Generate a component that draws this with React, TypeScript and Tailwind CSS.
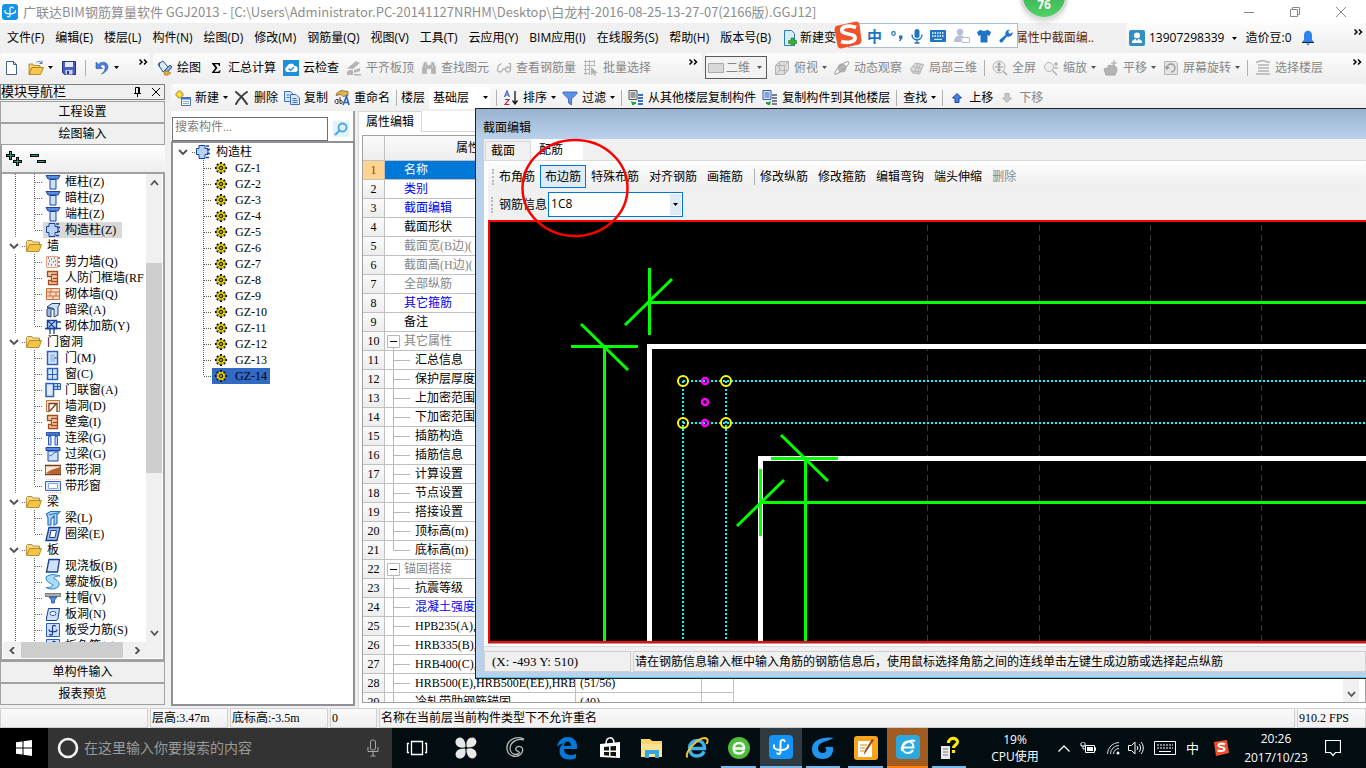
import React from 'react';

const UI = "font-['Open_Sans','Noto_Sans_CJK_SC',sans-serif]";
const SONG = "font-['Liberation_Serif','Noto_Sans_CJK_SC',serif]";

/* ---------- icons ---------- */

const GRAY = '#b4b4b4';

const ICONS: Record<string, React.ReactNode> = {
  file: <path d="M2.500 1.500h7l3 3v10h-10z M9.500 1.500v3h3" fill="#fff" stroke="#43608f" />,
  open: (
    <>
      <path d="M1 4h4l1 1.500h6V8H4l-3 6z" fill="#f3cf6a" stroke="#a87a1c" strokeWidth=".8" />
      <path d="M4 7.500h11.500l-3 7H1z" fill="#f7c64a" stroke="#a87a1c" strokeWidth=".8" />
      <path d="M8.500 2.500c2-2 4-1 5 .5M14 .8v2.700h-2.600" fill="none" stroke="#4a6fa0" />
    </>
  ),
  save: (
    <>
      <path d="M1.500 1.500h13v13h-11l-2-2z" fill="#4a5bc4" stroke="#28337e" />
      <path d="M4 2h8v5H4z" fill="#e6eaff" />
      <path d="M4.500 10h7v4.500h-7z" fill="#cfd4ea" />
      <path d="M6 11h2v3H6z" fill="#28337e" />
    </>
  ),
  undo: <path d="M2 2v6.500h6.500L6.300 6.300C9 3.500 12 5 11 9c-.5 2-2 4-3.500 5C13 12 15.500 7.500 13 4 11 1.500 7 1.600 4.300 4.300z" fill="#4a7fdc" stroke="#2b55a8" strokeWidth=".6" />,
  paint: (
    <>
      <path d="M1 4l5-3 5 6-5 5z" fill="#dbe8f8" stroke="#31558f" />
      <path d="M3 2l-1 5" stroke="#31558f" />
      <path d="M8 10l5-5 2 2-5 6z" fill="#86aee0" stroke="#31558f" />
      <path d="M7 12l3-1 4 2-4 2.500-3-1z" fill="#e0b13a" stroke="#8d6b17" strokeWidth=".6" />
    </>
  ),
  sigma: <path d="M4 3h8v3h-1C10.700 4.700 10.300 4.300 9 4.300H6.800L9.500 8l-3.300 3.700H9.500c1.500 0 2-.6 2.300-1.700h.7L12 13H4v-.8L7.400 8 4 3.800z" fill="#000" />,
  cloud: (
    <>
      <rect width="16" height="16" fill="#1e8fd8" />
      <path d="M4 12a3 3 0 0 1 0-5.500 4 4 0 0 1 7.500-.5A3 3 0 0 1 12 12z" fill="#fff" />
      <path d="M5.500 8.500l2 2 3.500-3.500" fill="none" stroke="#1e8fd8" strokeWidth="1.400" />
    </>
  ),
  align: <path d="M1 8.500L10 1l4 2-7 6zM3 10h4v5H1v-3zM8 10l6-2v3l-6 2zM8 14h7v1.500H8z" fill={GRAY} />,
  binoc: <path d="M3 2h3v3h4V2h3l2 6v6h-5V9H6v5H1V8z M4.500 5v3M11.500 5v3" fill={GRAY} stroke="#ddd" strokeWidth=".6" />,
  glasses: <path d="M6.500 9.500a2.500 2.500 0 1 1-5 0c0-3 1.500-5 4-6M14.500 9.500a2.500 2.500 0 1 1-5 0 2.500 2.500 0 0 1 5 0V4l-2-1M6.500 9h3" fill="none" stroke={GRAY} strokeWidth="1.300" />,
  batch: (
    <>
      <path d="M1 1.500h11M1 5.500h11M1 9.500h6M2.500 0v15M6.500 0v15M11.500 0v6M1 13.500h5" stroke={GRAY} />
      <path d="M8 7l7 6-3 .3 1 2.300-1.500.4-1-2.500L8 15z" fill={GRAY} />
    </>
  ),
  rect: <path d="M.5 3.500h15v9H.5z" fill="#d8d8d8" stroke="#aaa" />,
  cube: (
    <>
      <path d="M1.500 5.500l4-4h9v8l-4 5h-9z" fill="#ddd" stroke={GRAY} />
      <path d="M1.500 5.500h9v9M10.500 5.500l4-4M5.500 2v8.500h9M5.500 10.500l-4 4" fill="none" stroke={GRAY} />
    </>
  ),
  orbit: (
    <>
      <circle cx="8" cy="8" r="4.500" fill={GRAY} />
      <path d="M1 14.500C-1 11 9 2 14 1.500c4 1-6 11-13 13z" fill="none" stroke="#9d9d9d" />
    </>
  ),
  local: (
    <>
      <path d="M1.500 9l5-6 8 1.500-4 9.500-7-1z" fill="#ddd" stroke={GRAY} />
      <path d="M3.500 6.500l9.500 2M9 3.500L5 13.500M11.500 4L8 14M2.500 11l9 1" stroke={GRAY} />
    </>
  ),
  full: (
    <>
      <circle cx="7" cy="7" r="6" fill="#eee" stroke={GRAY} />
      <path d="M7 3v8M3 7h8M5.500 4.500L7 3l1.500 1.500M5.500 9.500L7 11l1.500-1.500M11.500 11.500l3.500 3.500" fill="none" stroke="#9a9a9a" strokeWidth="1.200" />
    </>
  ),
  zoom: (
    <>
      <circle cx="6" cy="7" r="4.500" fill="#eee" stroke={GRAY} />
      <path d="M9.500 10.500L14 15M13 2v4M11 4h4M11 8h4" fill="none" stroke={GRAY} strokeWidth="1.500" />
    </>
  ),
  hand: <path d="M3 15l-2-6 2-1 2 1V6l2-1 1 1 2-1 3 2 1 3-2 5zM11 0v6M8 3h6" fill={GRAY} stroke="#a5a5a5" />,
  rotate: (
    <>
      <path d="M1.500 1.500h11l2 2v11h-13z" fill="#e4e4e4" stroke={GRAY} />
      <path d="M4 8a4 4 0 1 1 4 4M2.500 6.500L4 9l2-2" fill="none" stroke="#999" strokeWidth="1.400" />
    </>
  ),
  floors: <path d="M1 2.500L7 .5l8 2M3 5h11M3 8h11M3 11h11M1 14h14" fill="none" stroke={GRAY} strokeWidth="1.700" />,
  create: (
    <>
      <path d="M3 1h3v2h2v3H6v2H3V6H1V3h2z" fill="#ffe24a" stroke="#9a7d12" strokeWidth=".7" />
      <path d="M6.500 7.500h9v8h-9z" fill="#fff" stroke="#4774b8" />
      <path d="M6.500 7.500h9v2h-9z" fill="#3c74c8" />
      <path d="M8 11.500h6M8 13.500h6" stroke="#8aa9d8" />
    </>
  ),
  del: <path d="M2 2c4 3 8 7 11 12M13 2C8 5 5 9 2 14" stroke="#3c3c3c" strokeWidth="2" fill="none" strokeLinecap="round" />,
  copy: (
    <>
      <path d="M.5 1.500h6l3 3v7h-9z" fill="#dbe8fa" stroke="#3f6fc0" />
      <path d="M6.500 4.500h5.500l3.500 3.500v6.500h-9z" fill="#dbe8fa" stroke="#3f6fc0" />
      <path d="M8.500 8.500h4M8.500 10.500h5M8.500 12.500h5M2.500 5h3M2.500 7.500h3" stroke="#3f6fc0" />
    </>
  ),
  rename: (
    <>
      <path d="M3 3l4-2.500 7 1v4l-5 1-2-2-5 1z" fill="#e0b64d" stroke="#6b5314" strokeWidth=".7" />
      <path d="M9 15l3.500-8.500L15 15M10 12.500h4" stroke="#2f62c0" strokeWidth="1.600" fill="none" />
      <path d="M4 9.500c-4-1-4 5 0 4V9M6 7v6.500c3 1 3-4 0-3" fill="none" stroke="#333" />
    </>
  ),
  sort: (
    <>
      <path d="M1.500 7L4 1l2.500 6M2.500 5h3" fill="none" stroke="#3f62b5" strokeWidth="1.200" />
      <path d="M2 9.500h4l-4 5h4.500" fill="none" stroke="#9c2f4c" strokeWidth="1.200" />
      <path d="M12 1v12M9.500 10.500L12 14l2.500-3.500" fill="none" stroke="#111" strokeWidth="1.300" />
    </>
  ),
  filter: <path d="M1 2h14v1.500L9.500 9v6l-3-2V9L1 3.500z" fill="#5c8fe6" stroke="#2f5db0" strokeWidth=".8" />,
  fromFloor: (
    <>
      <path d="M1 .5h8v9H1z" fill="#eee" stroke="#555" />
      <path d="M2.500 3h5M2.500 5h5M2.500 7h5" stroke="#444" />
      <path d="M10 5h5M10 8h5M10 11h5M10 14h5" stroke="#3a6fc4" strokeWidth="1.800" />
      <path d="M4 15l-1-4 2 1h3v2H6l1 1z" fill="#1da33b" />
    </>
  ),
  toFloor: (
    <>
      <path d="M1 .5h8v9H1z" fill="#dfe9fb" stroke="#3459b4" />
      <path d="M2.500 3h5M2.500 5h5M2.500 7h5" stroke="#3459b4" />
      <path d="M10 5h5M10 8h5M10 11h5M10 14h5" stroke="#75808e" strokeWidth="1.800" />
      <path d="M8 15l1-4-2 1H4v2h2l-1 1z" fill="#1da33b" />
    </>
  ),
  up: <path d="M8 3.500l4.500 4.500H10v4.500H6V8H3.500z" fill="#4a80e8" stroke="#1c3f94" />,
  down: <path d="M8 12.500L3.500 8H6V3.500h4V8h2.500z" fill="#c8c8c8" stroke="#b0b0b0" />,
  newDoc: (
    <>
      <path d="M2.500.5h7l3 3v12h-10z" fill="#d6ecfb" stroke="#2f7cb8" />
      <path d="M9 8h3v2.500h2.500v3H12V16H9v-2.500H6.500v-3H9z" fill="#35b436" stroke="#1d7c22" strokeWidth=".6" />
    </>
  ),
  user: (
    <>
      <rect width="16" height="16" rx="2" fill="#2f8fc6" />
      <circle cx="8" cy="5.500" r="3" fill="#fff" />
      <path d="M3 13v-2l3-2h4l3 2v2z" fill="#fff" />
      <path d="M6.500 8.500L8 11l1.500-2.500z" fill="#2f8fc6" />
    </>
  ),
  bell: (
    <>
      <path d="M8 .8c3 0 4 2.500 4 5v4l2 2.500H2l2-2.500v-4c0-2.500 1-5 4-5z" fill="#2f83f0" />
      <path d="M2 12.500h12" stroke="#222" />
      <path d="M6 13.500h4L8 15.500z" fill="#2f83f0" />
    </>
  ),
  folder: (
    <>
      <path d="M.5 13V3.500l1-1H6l1 1.500h6.500v3" fill="#f3d98b" stroke="#a87a1c" strokeWidth=".8" />
      <path d="M3.500 6.500h12L13 13.500H.7z" fill="#f6c443" stroke="#a87a1c" strokeWidth=".8" />
    </>
  ),
  pillar: (
    <>
      <path d="M1 1.500h14l-2 3.500H3z" fill="#5b8be0" stroke="#1c469c" />
      <path d="M5 5.500h6v9.500H5z" fill="#cfe0fa" stroke="#1c469c" />
    </>
  ),
  gz: (
    <>
      <path d="M4 1.500h6v3h3v6h-3v4H4v-4H1.500v-6H4z" fill="#b9d1f5" stroke="#16429c" />
      <path d="M11 2h3M12 5.500h3M12 9.500h3M11 13.500h3" stroke="#16429c" strokeWidth="1.600" />
    </>
  ),
  shear: (
    <>
      <path d="M1.500 2.500h11v11h-11z" fill="#ededed" stroke="#e5a07e" />
      <path d="M3 4h1M6 5h1M9 4h1M4 7h1M8 8h1M3 10h1M6 11h1M10 11h1M10 7h1" stroke="#333" />
      <path d="M13 4h2M13 8h2M13 12h2" stroke="#c5511a" strokeWidth="1.500" />
    </>
  ),
  niche: <path d="M2.500 1.500h10v13h-9v-4h3v-4h-4zM6 4.500h6.500M8 8.500h4M6 11.500h6" fill="#f7cfae" stroke="#a84a12" strokeWidth="1.300" />,
  brick: (
    <>
      <path d="M1.500 2.500h13v11h-13z" fill="#fbd8bf" stroke="#c4713e" />
      <path d="M1.500 6h13M1.500 10h13M6 2.500V6M11 6v4M5 6v4M8 10v3.500" stroke="#c4713e" />
    </>
  ),
  hiddenBeam: (
    <>
      <path d="M2 5l5-3.500h8L13 5v8l-4 2V7z" fill="#cfe0f5" stroke="#25416e" />
      <path d="M2 5l7 1v2L2 7z" fill="#385f9f" />
      <path d="M2 7v7l4 1V7.500" fill="#9dbbe2" stroke="#25416e" />
    </>
  ),
  masonry: (
    <>
      <path d="M2.500 2.500h9v8h-9z" fill="#cfe0fa" stroke="#16429c" strokeWidth="1.500" />
      <path d="M0 10.500h16M12 4h4M5 10v6M9 10v6M3 3l7 7M10 3L4 9" stroke="#16429c" strokeWidth="1.300" />
    </>
  ),
  door: (
    <>
      <path d="M2.500 1.500h10v13h-10z" fill="#d7e6fb" stroke="#2a5fbe" strokeWidth="1.500" />
      <path d="M5 4h5v8H5z" fill="#a8c8f2" />
      <path d="M10 8h1.500" stroke="#111" />
    </>
  ),
  window: (
    <>
      <path d="M2.500 2.500h10v11h-10z" fill="#cfe3fb" stroke="#2a5fbe" strokeWidth="1.500" />
      <path d="M7.500 2v12M2.500 8.500h10" stroke="#2a5fbe" />
    </>
  ),
  doorWindow: (
    <>
      <path d="M1 1.500h7.500v13H1z" fill="#dfeafc" stroke="#2a5fbe" strokeWidth="1.500" />
      <path d="M9 1.500h6.500v6H9zM12.500 1v7M9 4.500h7" fill="#bcd6f8" stroke="#2a5fbe" />
    </>
  ),
  wallHole: (
    <>
      <path d="M1.500 2.500h13v11h-13z" fill="#fbe3d2" stroke="#c4713e" />
      <path d="M4 14V5.500h8V14M5 13l6-7" fill="#fff" stroke="#7a3d14" strokeWidth="1.300" />
    </>
  ),
  linkBeam: (
    <>
      <path d="M1 2h14v4H1z" fill="#2a5fbe" />
      <path d="M2.500 4h11" stroke="#cfe0fa" strokeDasharray="1 2" />
      <path d="M3.500 6.500h2.500V15H3.500zM10 6.500h2.500V15H10z" fill="#bcd6f8" stroke="#2a5fbe" />
    </>
  ),
  lintel: (
    <>
      <path d="M1 1.500h14v3H1z" fill="#5b8be0" stroke="#1c469c" />
      <path d="M3 5h10v10H3z" fill="#cfe0fa" stroke="#1c469c" />
      <path d="M4 10l3 -1 2-2 3-1" stroke="#3b79d8" fill="none" />
    </>
  ),
  stripHole: (
    <>
      <path d="M0 3.500h16v9H0z" fill="#fbeadd" stroke="#7a3d14" strokeWidth="1.500" />
      <path d="M1 11l5-3 9-3v7H6z" fill="#b5652c" />
    </>
  ),
  stripWindow: (
    <>
      <path d="M.5 3.500h15v9H.5z" fill="#dfeafc" stroke="#3763c4" />
      <path d="M3.500 5.500h9v5h-9z" fill="#fff" stroke="#86a8e6" />
      <path d="M1 1.500h15M1 14.500h15" stroke="#f0b9b0" strokeDasharray="1 1" />
    </>
  ),
  beam: <path d="M1.500 4l4-2.500H15l-3 3v9l-3 1.500V6L6 9v6H3V8zM4 5l8-2" fill="#b5d6f6" stroke="#1f73c4" strokeWidth="1.200" />,
  ringBeam: (
    <>
      <path d="M4 1.500h11l-3 13H1z" fill="#9fc1f0" stroke="#163f94" strokeWidth="1.300" />
      <path d="M6 4.500h5.500l-1.500 7H4.500z" fill="#fff" stroke="#163f94" />
    </>
  ),
  slab: <path d="M4 1.500h10.500l-2 12.500H1.500z" fill="#cfe0f8" stroke="#163f94" strokeWidth="1.300" />,
  spiral: <path d="M1 3C5-.5 11 .5 15 2c-3 0-6 .5-6 2.500 3 1.500 6 4 5 7-2 4-9 4.500-13 2 3 0 7-.5 7-2.500C5 9 1 8 1 3z" fill="#a9dcf8" stroke="#1f83cf" />,
  cap: (
    <>
      <path d="M0 3.500h16v3H0z" fill="#aaa" stroke="#666" strokeWidth=".8" />
      <path d="M4 7h8l-2.500 3v3h-3v-3z" fill="#5b8be0" stroke="#1c469c" strokeWidth=".8" />
    </>
  ),
  slabHole: (
    <>
      <path d="M3.500 2.500h11l-1.500 10-1.500 2H1.500V12z" fill="#cfe0f8" stroke="#163f94" />
      <ellipse cx="8" cy="7.500" rx="3" ry="2" fill="#fff" stroke="#2a5fbe" />
    </>
  ),
  rebar: (
    <>
      <path d="M1.500 1.500h13v13h-13z" fill="#cfe0fa" stroke="#2a5fbe" />
      <path d="M7.500 13V5c0-2 2.500-2 3-.5M4 7.500c0 3 8 3 8 0M7.500 12c-.5 1.500-2.500 1.500-3 0" fill="none" stroke="#163f94" strokeWidth="1.200" />
    </>
  ),
  gear: (
    <>
      <path d="M8 2v12M2 8h12M4 4l8 8M12 4l-8 8" stroke="#000" strokeWidth="2" />
      <circle cx="8" cy="8" r="4.500" fill="#ffe800" stroke="#333" strokeDasharray="1.500 1" />
      <path d="M8 4v8M4 8h8M5 5l6 6M11 5l-6 6" stroke="#5a5200" strokeWidth=".7" />
      <circle cx="8" cy="8" r="1.500" fill="#ffe800" stroke="#000" />
    </>
  ),
};

function Icon({ name, className = 'size-4' }: { name: string; className?: string }) {
  return (
    <svg viewBox="0 0 16 16" className={`${className} shrink-0`} fill="none" aria-hidden="true">
      {ICONS[name]}
    </svg>
  );
}

function Caret({ className = 'text-black' }: { className?: string }) {
  return (
    <svg viewBox="0 0 5 3" className={`h-[3px] w-[5px] shrink-0 ${className}`} aria-hidden="true">
      <path d="M0 0h5L2.500 3z" fill="currentColor" />
    </svg>
  );
}

function Chevron({ className = 'h-[7px] w-[9px]', d = 'M1 1l3.500 4L8 1' }: { className?: string; d?: string }) {
  return (
    <svg viewBox="0 0 9 7" className={`shrink-0 ${className}`} fill="none" aria-hidden="true">
      <path d={d} stroke="#505050" strokeWidth="1.800" />
    </svg>
  );
}

function More() {
  return (
    <button aria-label="更多" className="mb-3 ml-auto shrink-0 self-center">
      <svg viewBox="0 0 9 6" className="h-[6px] w-[9px]" fill="none" aria-hidden="true">
        <path d="M.5 .5L3 3 .5 5.500M5 .5L7.500 3 5 5.500" stroke="#000" strokeWidth="1.500" />
      </svg>
    </button>
  );
}

function Sep() {
  return <span className="h-4 w-px shrink-0 bg-[#b0b0b0]" />;
}

/* ---------- toolbars ---------- */

function Tool({ icon, text, drop, off }: { icon?: string; text?: string; drop?: boolean; off?: boolean }) {
  return (
    <button
      aria-label={text ? undefined : icon}
      className={`flex shrink-0 items-center gap-1 whitespace-nowrap ${off ? 'text-[#868686]' : 'text-black'}`}
    >
      {icon && <Icon name={icon} />}
      {text}
      {drop && <Caret className={off ? 'text-[#555]' : 'text-black'} />}
    </button>
  );
}

const MENU = ['文件(F)', '编辑(E)', '楼层(L)', '构件(N)', '绘图(D)', '修改(M)', '钢筋量(Q)', '视图(V)', '工具(T)', '云应用(Y)', 'BIM应用(I)', '在线服务(S)', '帮助(H)', '版本号(B)'];

const BAR = 'flex items-center rounded-sm bg-linear-to-b from-[#fcfcfc] to-[#eeeeee]';

function TitleBar() {
  return (
    <header className="flex h-[23px] shrink-0 items-center bg-white pl-[6px] text-[#8d8d8d]">
      <svg viewBox="0 0 16 16" className="ml-[-4px] size-4 shrink-0" fill="none" aria-hidden="true">
        <rect width="16" height="16" rx="3" fill="#1593e6" />
        <path d="M11.500 4.500C11 2.500 8 2.500 8 5v6.500c0 1.500-2 2-2.700.5M3 8c1 2.500 9.500 2.500 10.500-.5M3 8.500V6M13.500 8.500V6" stroke="#fff" strokeWidth="1.200" />
      </svg>
      <h1 className="ml-[5px] truncate font-['Noto_Sans_CJK_SC',sans-serif] text-[13px]">
        广联达BIM钢筋算量软件 GGJ2013 - [C:\Users\Administrator.PC-20141127NRHM\Desktop\白龙村-2016-08-25-13-27-07(2166版).GGJ12]
      </h1>
      <div className="ml-auto flex items-center gap-9 pr-5">
        <button aria-label="最小化"><svg viewBox="0 0 10 10" className="size-[10px]"><path d="M0 5.500h10" stroke="#888" /></svg></button>
        <button aria-label="还原"><svg viewBox="0 0 10 10" className="size-[10px]" fill="none"><path d="M.5 2.500h7v7h-7zM2.500 2.500v-2h7v7h-2" stroke="#888" /></svg></button>
        <button aria-label="关闭"><svg viewBox="0 0 10 10" className="size-[10px]"><path d="M0 0l10 10M10 0L0 10" stroke="#888" /></svg></button>
      </div>
    </header>
  );
}

function MenuBar() {
  return (
    <nav className="flex h-[30px] shrink-0">
      <div className="flex min-w-0 flex-1 items-center gap-[11px] overflow-hidden pl-[7px]">
        {MENU.map((m) => (
          <button key={m} className="shrink-0 whitespace-nowrap">{m}</button>
        ))}
        <button className="flex shrink-0 items-center gap-[2px] whitespace-nowrap">
          <Icon name="newDoc" />
          新建变
        </button>
        <a href="#help" className="ml-auto shrink-0 pr-8 whitespace-nowrap text-[#5f2500]">属性中截面编..</a>
      </div>
      <div className={`${BAR} w-[240px] shrink-0 gap-1 px-[3px]`}>
        <Icon name="user" />
        <button className="flex items-center gap-2 pr-1">
          13907298339
          <Caret />
        </button>
        <button className="flex items-center gap-2">
          造价豆:0
          <Icon name="bell" />
        </button>
        <More />
      </div>
    </nav>
  );
}

function MainToolbar() {
  return (
    <div className="flex h-[31px] shrink-0 gap-[3px] pb-[2px]">
      <div className={`${BAR} w-[150px] shrink-0 gap-2 pr-[2px] pl-1`}>
        <Tool icon="file" />
        <Tool icon="open" drop />
        <Tool icon="save" />
        <Sep />
        <Tool icon="undo" drop />
        <More />
      </div>
      <div className={`${BAR} w-[549px] shrink-0 gap-[7px] px-1`}>
        <Tool icon="paint" text="绘图" />
        <Tool icon="sigma" text="汇总计算" />
        <Tool icon="cloud" text="云检查" />
        <Tool icon="align" text="平齐板顶" off />
        <Tool icon="binoc" text="查找图元" off />
        <Tool icon="glasses" text="查看钢筋量" off />
        <Tool icon="batch" text="批量选择" off />
        <More />
      </div>
      <div className={`${BAR} min-w-0 flex-1 gap-[7px] pr-1`}>
        <label className="relative flex h-[23px] w-[62px] shrink-0 items-center border border-[#5a5a5a] bg-[#f2f2f2] pl-[2px] text-[#868686]">
          <Icon name="rect" />
          <select aria-label="视图模式" className="ml-[2px] w-full appearance-none bg-transparent outline-none">
            <option>二维</option>
          </select>
          <Caret className="absolute right-1 text-[#555]" />
        </label>
        <Tool icon="cube" text="俯视" drop off />
        <Tool icon="orbit" text="动态观察" off />
        <Tool icon="local" text="局部三维" off />
        <Sep />
        <Tool icon="full" text="全屏" off />
        <Tool icon="zoom" text="缩放" drop off />
        <Tool icon="hand" text="平移" drop off />
        <Tool icon="rotate" text="屏幕旋转" drop off />
        <Sep />
        <Tool icon="floors" text="选择楼层" off />
        <More />
      </div>
    </div>
  );
}

function ComponentToolbar() {
  return (
    <div className={`${BAR} h-[27px] shrink-0 gap-[6px] overflow-hidden pl-1`}>
      <Tool icon="create" text="新建" drop />
      <Tool icon="del" text="删除" />
      <Tool icon="copy" text="复制" />
      <Tool icon="rename" text="重命名" />
      <label className="flex shrink-0 items-center gap-1">
        <Sep />
        楼层
        <span className="relative flex h-[22px] w-[61px] items-center bg-white">
          <select className="w-full appearance-none bg-transparent pl-1 outline-none">
            <option>基础层</option>
          </select>
          <Caret className="absolute right-[2px]" />
        </span>
      </label>
      <Sep />
      <Tool icon="sort" text="排序" drop />
      <Tool icon="filter" text="过滤" drop />
      <Sep />
      <Tool icon="fromFloor" text="从其他楼层复制构件" />
      <Tool icon="toFloor" text="复制构件到其他楼层" />
      <Sep />
      <Tool text="查找" drop />
      <Sep />
      <Tool icon="up" text="上移" />
      <Tool icon="down" text="下移" off />
    </div>
  );
}

/* ---------- navigation tree ---------- */

type Group = { name?: string; items: [string, string][] };

const GROUPS: Group[] = [
  { items: [['pillar', '框柱(Z)'], ['pillar', '暗柱(Z)'], ['pillar', '端柱(Z)'], ['gz', '构造柱(Z)']] },
  { name: '墙', items: [['shear', '剪力墙(Q)'], ['niche', '人防门框墙(RF'], ['brick', '砌体墙(Q)'], ['hiddenBeam', '暗梁(A)'], ['masonry', '砌体加筋(Y)']] },
  {
    name: '门窗洞',
    items: [['door', '门(M)'], ['window', '窗(C)'], ['doorWindow', '门联窗(A)'], ['wallHole', '墙洞(D)'], ['niche', '壁龛(I)'], ['linkBeam', '连梁(G)'], ['lintel', '过梁(G)'], ['stripHole', '带形洞'], ['stripWindow', '带形窗']],
  },
  { name: '梁', items: [['beam', '梁(L)'], ['ringBeam', '圈梁(E)']] },
  { name: '板', items: [['slab', '现浇板(B)'], ['spiral', '螺旋板(B)'], ['cap', '柱帽(V)'], ['slabHole', '板洞(N)'], ['rebar', '板受力筋(S)'], ['rebar', '板负筋(F)']] },
];

function NavTree() {
  return (
    <ul className="min-h-0 flex-1 overflow-hidden">
      {GROUPS.map((g, gi) => (
        <React.Fragment key={gi}>
          {g.name && (
            <li className="flex h-4 items-center">
              <svg viewBox="0 0 23 16" className="h-4 w-[23px] shrink-0" fill="none" aria-hidden="true">
                <path d="M7 6l4 4 4-4" stroke="#505050" strokeWidth="1.800" />
                <path d="M19 8.500h4" stroke="#666" strokeDasharray="1 1" />
              </svg>
              <Icon name="folder" />
              <span className="pl-[5px]">{g.name}</span>
            </li>
          )}
          {g.items.map(([icon, text], i) => (
            <li key={text} className="flex h-4 items-center whitespace-nowrap">
              <svg viewBox="0 0 40 16" className="h-4 w-10 shrink-0" fill="none" aria-hidden="true">
                <path
                  d={`M12.500 0v16M31.500 0v${i === g.items.length - 1 && gi < 4 ? 8 : 16}M32 8.500h8`}
                  stroke="#666"
                  strokeDasharray="1 1"
                />
              </svg>
              <button className={`flex h-4 items-center gap-1 pr-[6px] pl-[2px] ${text === '构造柱(Z)' ? 'bg-[#d9d9d9]' : ''}`}>
                <Icon name={icon} />
                {text}
              </button>
            </li>
          ))}
        </React.Fragment>
      ))}
    </ul>
  );
}

const NAV_BTN = 'h-[22px] w-full shrink-0 border border-[#a0a0a0] bg-[#f0f0f0] text-center';

function NavPanel() {
  return (
    <aside className={`flex w-[165px] shrink-0 flex-col pb-[3px] ${SONG}`}>
      <div className="mb-px flex h-4 shrink-0 items-center border border-[#808080] pr-1">
        <span className="text-[13px]">模块导航栏</span>
        <button aria-label="固定" className="ml-auto">
          <svg viewBox="0 0 9 10" className="h-[10px] w-[9px]" fill="none"><path d="M2.500 6V.5h4V6M1 6.500h7M4.500 7v3M5.500 1v5" stroke="#000" /></svg>
        </button>
        <button aria-label="关闭面板" className="ml-[10px]">
          <svg viewBox="0 0 8 8" className="size-2"><path d="M0 0l8 8M8 0L0 8" stroke="#000" /></svg>
        </button>
      </div>
      <button className={NAV_BTN}>工程设置</button>
      <button className={NAV_BTN}>绘图输入</button>
      <div className="flex h-[27px] shrink-0 items-center gap-2 border-l-2 border-[#a0a0a0] bg-linear-to-b from-white to-[#eeeeee] pl-1">
        <button aria-label="全部展开">
          <svg viewBox="0 0 16 15" className="h-[15px] w-4"><path d="M4.500 0v9M0 4.500h9M11.500 6v9M7 10.500h9" stroke="#000" strokeWidth="3" /><path d="M4.500 1v7M1 4.500h7M11.500 7v7M8 10.500h7" stroke="#1fa08c" /></svg>
        </button>
        <button aria-label="全部折叠">
          <svg viewBox="0 0 16 15" className="h-[15px] w-4"><path d="M0 4.500h9M7 10.500h9" stroke="#000" strokeWidth="3" /><path d="M1 4.500h7M8 10.500h7" stroke="#1fa08c" /></svg>
        </button>
      </div>
      <div className="flex min-h-0 flex-1 flex-col border-2 border-[#a0a0a0] bg-white p-px pt-0">
        <div className="flex min-h-0 flex-1">
          <NavTree />
          <div className="flex w-4 shrink-0 flex-col items-center bg-[#f0f0f0] py-[5px]">
            <Chevron d="M1 6l3.500-4L8 6" />
            <span className="mt-[77px] h-[210px] w-full bg-[#cdcdcd]" />
            <span className="mt-auto"><Chevron /></span>
          </div>
        </div>
        <div className="flex h-4 shrink-0 items-center bg-[#f0f0f0] px-[5px]">
          <Chevron d="M6 0L2.500 3.500 6 7" />
          <span className="ml-1 h-full w-[102px] bg-[#cdcdcd]" />
          <span className="ml-[10px]"><Chevron d="M2.500 0L6 3.500 2.500 7" /></span>
        </div>
      </div>
      <button className={NAV_BTN}>单构件输入</button>
      <button className={NAV_BTN}>报表预览</button>
    </aside>
  );
}

/* ---------- component list ---------- */

const PARTS = Array.from({ length: 14 }, (_, i) => `GZ-${i + 1}`);

function PartList() {
  return (
    <section className={`flex w-[184px] shrink-0 flex-col pb-[2px] ${SONG}`}>
      <div className="flex h-[31px] shrink-0 items-center gap-[5px] border-r-2 border-[#a0a0a0] bg-white pt-[5px] pr-1 pl-px">
        <input
          aria-label="搜索构件"
          placeholder="搜索构件..."
          className="h-6 min-w-0 flex-1 border border-[#707070] bg-white px-[2px] pb-1 outline-none placeholder:text-[#808080]"
        />
        <button aria-label="搜索" className="grid size-4 shrink-0 place-items-center bg-[#e3f2fc]">
          <svg viewBox="0 0 14 14" className="size-[14px]" fill="none"><circle cx="8.500" cy="5.500" r="4" stroke="#4aa5e8" strokeWidth="1.800" /><path d="M5.500 8.500L1 13" stroke="#4aa5e8" strokeWidth="2.200" /></svg>
        </button>
      </div>
      <ul className="mt-[-1px] min-h-0 flex-1 border-2 border-[#8e9196] bg-white pt-px">
        <li className="flex h-4 items-center">
          <svg viewBox="0 0 22 16" className="h-4 w-[22px] shrink-0" fill="none" aria-hidden="true">
            <path d="M6 6l4 4 4-4" stroke="#505050" strokeWidth="1.800" />
            <path d="M19 8.500h3" stroke="#666" strokeDasharray="1 1" />
          </svg>
          <Icon name="gz" />
          <span className="pl-[5px]">构造柱</span>
        </li>
        {PARTS.map((p, i) => (
          <li key={p} className="flex h-4 items-center">
            <svg viewBox="0 0 39 16" className="h-4 w-[39px] shrink-0" fill="none" aria-hidden="true">
              <path d={`M30.500 0v${i === 13 ? 8 : 16}M31 8.500h8`} stroke="#666" strokeDasharray="1 1" />
            </svg>
            <button className={`flex h-4 items-center gap-[6px] px-[1px] pr-[3px] ${i === 13 ? 'bg-[#316ac5]' : ''}`}>
              <Icon name="gear" />
              {p}
            </button>
          </li>
        ))}
      </ul>
    </section>
  );
}

/* ---------- property grid ---------- */

type Prop = { name: string; lv: 0 | 1 | 2; color?: 'blue' | 'gray'; last?: boolean; value?: string };

const PROPS: Prop[] = [
  { name: '名称', lv: 0 },
  { name: '类别', lv: 0, color: 'blue' },
  { name: '截面编辑', lv: 0, color: 'blue' },
  { name: '截面形状', lv: 0 },
  { name: '截面宽(B边)(', lv: 0, color: 'gray' },
  { name: '截面高(H边)(', lv: 0, color: 'gray' },
  { name: '全部纵筋', lv: 0, color: 'gray' },
  { name: '其它箍筋', lv: 0, color: 'blue' },
  { name: '备注', lv: 0 },
  { name: '其它属性', lv: 1, color: 'gray' },
  { name: '汇总信息', lv: 2 },
  { name: '保护层厚度', lv: 2 },
  { name: '上加密范围', lv: 2 },
  { name: '下加密范围', lv: 2 },
  { name: '插筋构造', lv: 2 },
  { name: '插筋信息', lv: 2 },
  { name: '计算设置', lv: 2 },
  { name: '节点设置', lv: 2 },
  { name: '搭接设置', lv: 2 },
  { name: '顶标高(m)', lv: 2 },
  { name: '底标高(m)', lv: 2, last: true },
  { name: '锚固搭接', lv: 1, color: 'gray' },
  { name: '抗震等级', lv: 2 },
  { name: '混凝土强度', lv: 2, color: 'blue' },
  { name: 'HPB235(A),', lv: 2 },
  { name: 'HRB335(B),', lv: 2 },
  { name: 'HRB400(C),', lv: 2 },
  { name: 'HRB500(E),HRB500E(EE),HRBF', lv: 2, value: '(51/56)' },
  { name: '冷轧带肋钢筋锚固', lv: 2, value: '(40)' },
];

function Gutter({ p }: { p: Prop }) {
  if (p.lv === 0) return <span className="w-[19px] shrink-0" />;
  if (p.lv === 1)
    return (
      <svg viewBox="0 0 19 18" className="h-[18px] w-[19px] shrink-0" fill="none" aria-hidden="true">
        <path d="M2.500 3.500h12v12h-12zM8.500 16v2" stroke="#b8b8b8" />
        <path d="M5 9.500h7" stroke="#000" />
      </svg>
    );
  return (
    <svg viewBox="0 0 30 19" className="h-[19px] w-[30px] shrink-0" fill="none" aria-hidden="true">
      <path d={p.last ? 'M8.500 0v9.500H25' : 'M8.500 0v19M8.500 9.500H25'} stroke="#b8b8b8" />
    </svg>
  );
}

const EDGE = 'border-r border-b border-[#c0c0c0] p-0';
const HEAD = `h-[25px] ${EDGE} font-normal`;
const CELL = `h-[19px] ${EDGE}`;

function PropertyPanel() {
  return (
    <section className={`flex min-w-0 flex-1 flex-col border-l border-[#d9d9d9] bg-white ${SONG}`}>
      <div className="flex h-[21px] shrink-0">
        <button className="h-full w-[62px] border-t border-[#d9d9d9] text-center">属性编辑</button>
        <span className="flex-1 border-b border-l border-[#d9d9d9]" />
      </div>
      <div className="mt-[3px] mb-[5px] ml-[3px] flex min-h-0 flex-1 border border-[#a0a0a0]">
        <div className="min-w-0 flex-1 overflow-hidden">
          <table className="w-[371px] table-fixed border-separate border-spacing-0">
            <colgroup>
              <col className="w-[22px]" />
              <col className="w-[191px]" />
              <col className="w-[126px]" />
              <col className="w-[32px]" />
            </colgroup>
            <thead>
              <tr className="bg-linear-to-b from-[#fafafa] to-[#ededed]">
                <th className={HEAD} />
                <th className={HEAD}>属性名称</th>
                <th className={HEAD} />
                <th className={HEAD} />
              </tr>
            </thead>
            <tbody>
              {PROPS.map((p, i) => (
                <tr key={p.name}>
                  <td className={`${CELL} text-center ${i === 0 ? 'bg-[#ffd48f] text-[#a0301a]' : 'bg-linear-to-b from-[#fafafa] to-[#ededed]'}`}>{i + 1}</td>
                  <td className={`${CELL} ${i === 0 ? 'bg-[#0078d7] text-white' : p.color === 'blue' ? 'text-[#0000ee]' : p.color === 'gray' ? 'text-[#868686]' : ''}`}>
                    <div className="flex h-[18px] items-center overflow-hidden whitespace-nowrap">
                      <Gutter p={p} />
                      {p.name}
                    </div>
                  </td>
                  <td className={`${CELL} pl-1`}>{p.value}</td>
                  <td className={CELL} />
                </tr>
              ))}
            </tbody>
          </table>
        </div>
        <div className="flex w-4 shrink-0 items-end justify-center bg-[#f0f0f0] pb-1">
          <Chevron />
        </div>
        <span className="w-[6px] shrink-0" />
      </div>
    </section>
  );
}

/* ---------- section editor ---------- */

const FAR = 3000;

function Drawing() {
  return (
    <svg className="block h-full w-full" fill="none" role="img" aria-label="配筋截面图">
      <g transform="translate(-490 -222)">
        <path d={`M927.500 225V${FAR}M1039.500 225V${FAR}M1150.500 225V${FAR}M1261.500 225V${FAR}`} stroke="#3a3a3a" strokeDasharray="6 4" />
        <path d={`M649.500 ${FAR}V346.500H${FAR}M760.500 ${FAR}V458.500H${FAR}`} stroke="#fff" strokeWidth="5" />
        <g stroke="#0ff" strokeWidth="2" strokeDasharray="2 2">
          <path d={`M683 381H${FAR}M683 423H${FAR}M683 381V${FAR}M726 381V${FAR}`} />
        </g>
        <g stroke="#0f0" strokeWidth="3">
          <path d={`M649.500 268V335M625 325L672 279M649 302.500H${FAR}`} />
          <path d={`M571 346.500H638M581 324L628 370M604.500 346V${FAR}`} />
          <path d={`M771 458.500H838M781 435L828 481M805.500 458V${FAR}`} />
          <path d={`M760.500 469V536M737 526L784 480M760 502.500H${FAR}`} />
        </g>
        <g stroke="#ff0" strokeWidth="2">
          {[[683, 381], [726, 381], [683, 423], [726, 423]].map(([x, y]) => (
            <circle key={`${x}-${y}`} cx={x} cy={y} r="5" />
          ))}
        </g>
        <g stroke="#f0f" strokeWidth="2.500">
          {[381, 402, 423].map((y) => (
            <circle key={y} cx="705" cy={y} r="3" />
          ))}
        </g>
      </g>
    </svg>
  );
}

function Grip() {
  return <span className="h-4 shrink-0 border-l-2 border-dotted border-[#b5b5b5]" />;
}

const EDIT_TOOLS = ['特殊布筋', '对齐钢筋', '画箍筋'];
const EDIT_TOOLS_2 = ['修改纵筋', '修改箍筋', '编辑弯钩', '端头伸缩'];

function SectionEditor() {
  return (
    <section
      aria-label="截面编辑"
      className="absolute top-6 right-0 bottom-[29px] left-[475px] flex flex-col border border-r-0 border-[#222] bg-[#b9d1ea] pl-2 shadow-[inset_0_-1px_0_#4cc3e8]"
    >
      <h2 className="ml-[-8px] flex h-[30px] shrink-0 items-center bg-linear-to-b from-[#9ab3d1] to-[#b9d1ea] pt-2 pl-[7px]">截面编辑</h2>
      <div className="mb-[6px] flex min-h-0 flex-1 flex-col bg-[#f0f0f0]">
        <div className="flex h-[22px] shrink-0 items-end border-b border-[#d9d9d9]">
          <button className="ml-px h-[19px] w-[46px] border border-b-0 border-[#d9d9d9] pr-[10px]">截面</button>
          <button className="h-[21px] w-[52px] bg-white pr-3">配筋</button>
        </div>
        <div className="flex min-h-0 flex-1 flex-col bg-white pt-[3px] pl-1">
          <div className="flex min-h-0 flex-1 flex-col bg-[#f0f0f0]">
            <div className={`${BAR} h-[25px] shrink-0 gap-[5px] pl-1 whitespace-nowrap`}>
              <Grip />
              <button>布角筋</button>
              <button className="h-[23px] w-[46px] border border-[#0078d7] bg-[#dfecf6]">布边筋</button>
              <div className="flex gap-[10px]">
                {EDIT_TOOLS.map((t) => <button key={t}>{t}</button>)}
              </div>
              <span className="w-px" />
              <Sep />
              <div className="flex gap-[10px]">
                {EDIT_TOOLS_2.map((t) => <button key={t}>{t}</button>)}
                <button className="text-[#868686]">删除</button>
              </div>
            </div>
            <div className="flex h-[31px] shrink-0 items-center gap-[6px] pl-[3px]">
              <Grip />
              <label htmlFor="rebar-info" className="flex items-center whitespace-nowrap">钢筋信息</label>
              <div className="ml-[-5px] flex h-[25px] w-[135px] border border-[#0078d7] bg-white p-px">
                <input id="rebar-info" defaultValue="1C8" className="min-w-0 flex-1 px-px pb-[2px] outline-none" />
                <button aria-label="展开" className="grid w-[11px] place-items-center bg-[#dfecf6]"><Caret /></button>
              </div>
            </div>
            <div className="min-h-0 flex-1 border-2 border-r-0 border-[#f00] bg-black">
              <Drawing />
            </div>
            <div className="h-[3px] shrink-0 border-t border-[#a0a0a0] bg-white" />
          </div>
        </div>
        <div className={`flex h-[26px] shrink-0 gap-[2px] border-t border-[#d9d9d9] pt-1 ${SONG}`}>
          <span className="flex w-[147px] items-center border border-[#d0d0d0] pl-[7px] text-[13px]">(X: -493 Y: 510)</span>
          <span className="flex min-w-0 flex-1 items-center border border-[#d0d0d0] pl-[1px] whitespace-nowrap">
            请在钢筋信息输入框中输入角筋的钢筋信息后，使用鼠标选择角筋之间的连线单击左键生成边筋或选择起点纵筋
          </span>
        </div>
      </div>
      <svg viewBox="0 0 110 102" className="pointer-events-none absolute top-[28px] left-11 h-[102px] w-[110px]" fill="none" aria-hidden="true">
        <ellipse cx="55" cy="51" rx="52.500" ry="48" stroke="#f00" strokeWidth="2.500" />
      </svg>
    </section>
  );
}

/* ---------- status bar & taskbar ---------- */

function StatusBar() {
  const cell = 'flex items-center border border-[#d0d0d0] bg-linear-to-b from-[#fafafa] to-[#f0f0f0] pl-[1px] whitespace-nowrap';
  return (
    <footer className={`flex h-5 shrink-0 gap-[2px] ${SONG}`}>
      <span className={`${cell} w-[148px]`} />
      <span className={`${cell} w-[78px]`}>层高:3.47m</span>
      <span className={`${cell} w-[98px]`}>底标高:-3.5m</span>
      <span className={`${cell} w-[47px]`}>0</span>
      <span className={`${cell} flex-1`}>名称在当前层当前构件类型下不允许重名</span>
      <span className={`${cell} w-[69px]`}>910.2 FPS</span>
    </footer>
  );
}

function Glodon({ bg }: { bg: string }) {
  return (
    <svg viewBox="0 0 24 24" className="size-6" fill="none">
      <rect width="24" height="24" rx="4" fill={bg} />
      <path d="M16 7c-1-3-4.500-3-4.500 1v9c0 2.500-3 2.500-3.500 .5M5 12c1 4 13 4 14-.5M5 13v-3.500M19 13V9.500" stroke="#fff" strokeWidth="2" />
    </svg>
  );
}

function IeMark({ color, ring }: { color: string; ring?: string }) {
  return (
    <svg viewBox="0 0 24 24" className="size-6" fill="none">
      <path d="M4.500 12.500h15c0-5-3-8-7.300-8-4.500 0-7.700 3.300-7.700 8 0 4.500 3.200 7.500 7.500 7.500 3.400 0 6-1.800 7-4.600" stroke={color} strokeWidth="3.400" />
      {ring && <path d="M2.500 21.500C-1 17 12 2 20 2c4 1 2.500 4 1.500 6" stroke={ring} strokeWidth="2" />}
    </svg>
  );
}

const APPS: { label: string; cls: string; art: React.ReactNode }[] = [
  { label: '任务视图', cls: 'w-[49px]', art: <svg viewBox="0 0 22 16" className="h-4 w-[22px]" fill="none"><path d="M5.500 1.500h11v13h-11zM3 3.500H1.500v9H3M19 3.500h1.500v9H19" stroke="#fff" strokeWidth="1.300" /></svg> },
  { label: '风扇', cls: 'w-[50px]', art: <svg viewBox="0 0 24 24" className="size-6" fill="#e8e8e8"><path d="M11.500 11C6 13 1 10 1.500 5 3-.5 12 0 11.500 11zM13 11.500C11 6 14 1 19 1.500 24.500 3 24 12 13 11.500zM12.500 13c5.500-2 10.500 1 10 6-1.500 5.500-10.500 5-10-6zM11 12.500c2 5.500-1 10.500-6 10-5.500-1.500-5-10.500 6-10z" /></svg> },
  { label: '螺旋', cls: 'w-[50px]', art: <svg viewBox="0 0 24 24" className="size-6" fill="none"><path d="M20 3C11-1 2 5 3 13c1 8 10 9 14 5 4-5 0-9-4-7-3 2 0 5 2 4M20 4C13 2 6 6 6 13c1 6 7 7 10 3" stroke="#bbb" strokeWidth="1.300" /></svg> },
  { label: 'Edge', cls: 'w-[51px]', art: <svg viewBox="0 0 24 24" className="size-6"><path d="M2 11C3 4 8 1 13 1c6 0 9 5 9 9v3H9c0 4 3 6 7 6 2 0 4-.6 5-1.300V22c-2 1-4.500 1.500-7 1.500C8 23.500 4.500 20 4.500 15c0-3 1.500-6 4-7.500C5.500 8 3 9 2 11zM9 10h7c0-3-1.500-4.500-3.500-4.500S9.200 7 9 10z" fill="#0078d7" /></svg> },
  { label: '应用商店', cls: 'w-[35px]', art: <svg viewBox="0 0 24 24" className="size-6" fill="none"><path d="M2 8l20-2v16L2 21z" fill="#fff" /><path d="M8 8c0-8 8-8 8-1" stroke="#fff" strokeWidth="1.500" /><path d="M6 11l5-.5v4H6zM12.500 10.300L18 10v4.500h-5.500zM6 16h5v3.700L6 19.300zM12.500 16H18v4.300l-5.500-.5z" fill="#111" /></svg> },
  { label: '资源管理器', cls: 'w-[50px]', art: <svg viewBox="0 0 24 24" className="size-6"><path d="M1 3h9l2 2h10v16H1z" fill="#fbd56d" /><path d="M1 8h21v13H1z" fill="#fde28f" /><path d="M5 22v-8h14v8h-4v-4H9v4z" fill="#34a7e0" /></svg> },
  { label: 'Internet Explorer', cls: 'w-[40px]', art: <IeMark color="#3fb2ee" ring="#f4c432" /> },
  { label: '360浏览器', cls: 'w-[43px]', art: <svg viewBox="0 0 24 24" className="size-6" fill="none"><circle cx="12" cy="12" r="11" fill="#4cbc3a" /><path d="M7 12.500h10c0-3.500-2-5.500-5-5.500s-5.300 2-5.300 5.500S9 17.500 12 17.500c2.300 0 4-1 5-3" stroke="#fff" strokeWidth="2.400" /></svg> },
  { label: '广联达', cls: 'w-[42px] bg-[#2f3b41] border-b-2 border-[#76b9ed]', art: <Glodon bg="#1593f6" /> },
  { label: 'G助手', cls: 'w-[42px]', art: <svg viewBox="0 0 24 24" className="size-6"><path d="M23 2C14 0 1 3 1 13c0 7 5 10 11 10 7 0 11-5 10-12h-8c2 2 2 6-2 6-3 0-5-2-5-5 0-6 8-6 16-10z" fill="#1e95ee" /></svg> },
  { label: '笔记', cls: 'w-[43px]', art: <svg viewBox="0 0 24 24" className="size-6" fill="none"><rect width="24" height="24" rx="3" fill="#f7a51c" /><path d="M4 5h14v16H4z" fill="#fff" /><path d="M6 9h7M6 12h5M6 15h4" stroke="#d98a12" /><path d="M20 4l-8 12-2 3 .5-4L18 3z" fill="#9a4a12" /></svg> },
  { label: '浏览器', cls: 'w-[41px] bg-[#a15a20] border-b-2 border-[#ff7d0a]', art: <svg viewBox="0 0 24 24" className="size-6" fill="none"><rect width="24" height="24" rx="4" fill="#2ba9df" /><path d="M7 12.500h10.500c0-4-2.500-6-5.500-6s-5.500 2.500-5.500 6 2.500 5.500 5.500 5.500c2.300 0 4-1 5-3M6 16C4 10 14 4 19 6" stroke="#fff" strokeWidth="2" /></svg> },
  { label: '帮助', cls: 'w-[42px]', art: <svg viewBox="0 0 24 24" className="size-6" fill="none"><path d="M4 10h9v13H4z" fill="#e8e8e8" /><path d="M6 13h5M6 16h5M6 19h5" stroke="#777" /><path d="M11.500 7c0-6 9-6 9-1 0 3-4 3-4 6M16.500 14v3" stroke="#ffe600" strokeWidth="3.200" /></svg> },
];

const RUNNING = ['360浏览器', 'G助手', '笔记', '帮助'];

function Taskbar() {
  return (
    <div className="flex h-10 shrink-0 bg-[#020d11] text-white">
      <button aria-label="开始" className="grid w-12 shrink-0 place-items-center bg-black">
        <svg viewBox="0 0 16 16" className="size-4"><path d="M0 2.300l6.500-.9v6.100H0zM7.500 1.200L16 0v7.500H7.500zM0 8.500h6.500v6.100L0 13.700zM7.500 8.500H16V16l-8.500-1.200z" fill="#fff" /></svg>
      </button>
      <label className="flex w-[344px] shrink-0 items-center bg-[#333] px-[9px]">
        <svg viewBox="0 0 22 22" className="size-[22px] shrink-0" fill="none"><circle cx="11" cy="11" r="9" stroke="#f2f2f2" strokeWidth="2.600" /></svg>
        <input aria-label="搜索" placeholder="在这里输入你要搜索的内容" className="min-w-0 flex-1 bg-transparent px-[5px] text-sm outline-none placeholder:text-[#9a9a9a]" />
        <svg viewBox="0 0 12 18" className="mr-1 h-[18px] w-3 shrink-0" fill="none"><rect x="3.500" y="1" width="5" height="10" rx="2" stroke="#aaa" /><path d="M1 8v4.500h10V8M6 13v4M3.500 17h5" stroke="#aaa" /></svg>
      </label>
      {APPS.map((a) => (
        <button key={a.label} aria-label={a.label} className={`relative grid shrink-0 place-items-center ${a.cls}`}>
          {a.art}
          {RUNNING.includes(a.label) && <span className="absolute inset-x-1 bottom-0 h-[2px] bg-[#76b9ed]" />}
        </button>
      ))}
      <div className="ml-auto flex shrink-0 items-center">
        <div className="w-[70px] text-center leading-[17px]">19%<br />CPU使用</div>
        <svg viewBox="0 0 12 7" className="ml-2 h-[7px] w-3" fill="none"><path d="M.5 6.500L6 1l5.500 5.500" stroke="#fff" strokeWidth="1.300" /></svg>
        <svg viewBox="0 0 16 12" className="ml-[10px] h-3 w-4" fill="none"><path d="M5.500 3.500h9v7h-9zM14.500 5.500h1v3h-1M1 1v3h4V1M3 4v3h2M2 0v1M4 0v1" stroke="#fff" /><path d="M7 5h6v4H7z" fill="#fff" /></svg>
        <svg viewBox="0 0 14 14" className="ml-[10px] size-[14px]" fill="none"><path d="M1.500 13A11.500 11.500 0 0 1 13 1.500M4.500 13A8.500 8.500 0 0 1 13 4.500M7.500 13A5.500 5.500 0 0 1 13 7.500" stroke="#ddd" /><circle cx="12" cy="12" r="1.500" fill="#fff" /></svg>
        <svg viewBox="0 0 16 14" className="ml-2 h-[14px] w-4" fill="none"><path d="M.5 4.500h3L7 1v12L3.500 9.500h-3zM9 5c1 1 1 3 0 4M11 3c2 2 2 6 0 8M13 1c3 3 3 9 0 12" stroke="#fff" /></svg>
        <svg viewBox="0 0 22 14" className="ml-[10px] h-[14px] w-[22px]" fill="none"><path d="M.5.5h21v13H.5z" stroke="#fff" /><path d="M3 4h16M3 7h16" stroke="#fff" strokeDasharray="2 1" /><path d="M5 10.500h12" stroke="#fff" /></svg>
        <span className="ml-[10px] text-[13px]">中</span>
        <svg viewBox="0 0 16 16" className="ml-[14px] size-4" fill="none"><path d="M1 2L14 0l2 13-13 3z" fill="#f2502a" /><path d="M12 4.500c-3-1.500-7-1-6.500 1.200.5 2 6 .8 6 3.300 0 2.200-4.500 2.500-7 1.500" stroke="#fff" strokeWidth="2" /></svg>
        <time className="ml-[10px] w-[74px] text-center leading-[19px]">20:26<br />2017/10/23</time>
        <svg viewBox="0 0 16 17" className="mr-[25px] ml-3 h-[17px] w-4" fill="none"><path d="M.5.500h15v12h-5L8 15.500l-2.500-3h-5z" stroke="#fff" strokeWidth="1.200" /></svg>
      </div>
    </div>
  );
}

/* ---------- floating widgets ---------- */

function ImeBar() {
  return (
    <div className="absolute top-[21px] left-[834px] flex h-[27px] items-center">
      <svg viewBox="0 0 28 28" className="z-10 size-7 shrink-0" fill="none" aria-hidden="true">
        <path d="M2 5l20-4.500q3 0 3.500 3l2 16q0 3-2.500 4L7 27.500q-3 0-3.500-3L.5 9q0-3 1.500-4z" fill="#f0522a" />
        <path d="M22 6.500C15 3.500 7 5.500 8 10c1 4 13 2 13 7 0 4.500-8 5-14 3.500" stroke="#fff" strokeWidth="3.800" />
      </svg>
      <div className="mt-[2px] ml-[-14px] flex h-[25px] w-[170px] items-center justify-between border border-[#a9bed4] bg-white pr-1 pl-[18px] text-[#1f74c6]">
        <span className="text-[15px] font-bold">中</span>
        <svg viewBox="0 0 14 14" className="size-[14px]" fill="none"><circle cx="3.500" cy="4.500" r="1.800" stroke="#1f74c6" strokeWidth="1.200" /><path d="M9 6.500h3.500V9l-2 3H9l1-2.500H9z" fill="#1f74c6" /></svg>
        <svg viewBox="0 0 12 16" className="h-4 w-3" fill="none"><rect x="3.500" y="1" width="5" height="9" rx="2.500" fill="#1f74c6" /><path d="M1 6.500c0 7 10 7 10 0M6 12v3M3.500 15h5" stroke="#1f74c6" strokeWidth="1.400" /></svg>
        <svg viewBox="0 0 16 12" className="h-3 w-4" fill="none"><rect width="16" height="12" rx="1" fill="#1f74c6" /><path d="M2 3h12M2 6h12" stroke="#fff" strokeWidth="1.500" strokeDasharray="1.500 1" /><path d="M4 9.300h8" stroke="#fff" /></svg>
        <svg viewBox="0 0 16 16" className="size-4"><circle cx="6" cy="4" r="3.200" fill="#b7bfd4" /><path d="M0 14c0-8 10-8 10-4H7v4z" fill="#b7bfd4" /><path d="M8 9.500h7.500v5H8z" fill="#fff" stroke="#b7bfd4" /></svg>
        <svg viewBox="0 0 14 14" className="size-[14px]"><path d="M4 .5c1 2 5 2 6 0L14 3l-1.500 4-2-1v7.500h-7V6l-2 1L0 3z" fill="#1f74c6" /></svg>
        <svg viewBox="0 0 14 14" className="size-[14px]"><path d="M1 13c-1-1-.5-2 0-2.500L6.500 6C5.500 3 8 0 11 .8L9 3l2 2 2.500-2C14.500 6 11 8.500 8 7.500L3.500 13C3 13.500 2 14 1 13z" fill="#1f74c6" /></svg>
      </div>
    </div>
  );
}

function Ball() {
  return (
    <div className="absolute top-[-28px] right-[298px] flex size-12 items-end justify-center rounded-full border-[3px] border-[#d8dcd8] bg-linear-to-b from-[#2f9c48] to-[#4fd266] pb-[3px] shadow-md">
      <span className="mb-px font-bold text-white">76</span>
    </div>
  );
}

export default function App() {
  return (
    <div className={`relative flex h-screen flex-col overflow-hidden bg-[#f0f0f0] text-[12px] leading-4 text-black ${UI}`}>
      <TitleBar />
      <MenuBar />
      <MainToolbar />
      <main className="relative flex min-h-0 flex-1 gap-[6px]">
        <NavPanel />
        <div className="flex min-w-0 flex-1 flex-col">
          <ComponentToolbar />
          <div className="flex min-h-0 flex-1 gap-[3px]">
            <PartList />
            <PropertyPanel />
          </div>
        </div>
        <SectionEditor />
      </main>
      <StatusBar />
      <Taskbar />
      <ImeBar />
      <Ball />
    </div>
  );
}
